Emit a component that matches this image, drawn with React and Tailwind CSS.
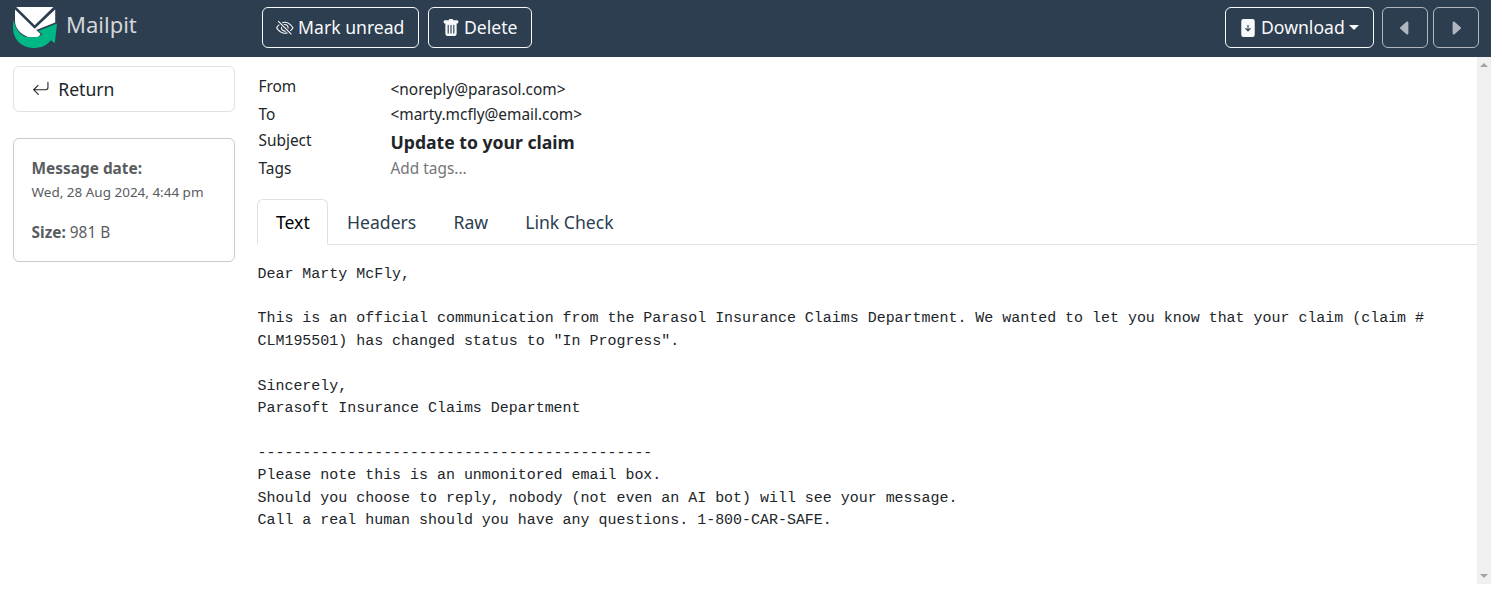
import { BsEyeSlash, BsTrashFill, BsFileArrowDownFill, BsCaretLeftFill, BsCaretRightFill, BsArrowReturnLeft } from "react-icons/bs";

const body = `Dear Marty McFly,

This is an official communication from the Parasol Insurance Claims Department. We wanted to let you know that your claim (claim # CLM195501) has changed status to "In Progress".

Sincerely,
Parasoft Insurance Claims Department

--------------------------------------------
Please note this is an unmonitored email box.
Should you choose to reply, nobody (not even an AI bot) will see your message.
Call a real human should you have any questions. 1-800-CAR-SAFE.`;

function Logo() {
  return (
    <svg className="block h-[42px] w-[45px]" viewBox="0 0 45 42">
      <path d="M3.2 0 H40.4 L21.7 18.3 Z" fill="#fff" />
      <path d="M2 2.6 L21.7 21.8 L42.2 2.4 V15.6 L23.2 23 L27.6 27 L25.2 30.2 H15.5 C7 27 2 21 2 14 Z" fill="#fff" />
      <path d="M0.6 13 C2.5 23 8 30 16 30.3 C22 30.5 27 30 29.3 27 L25.2 24 L44 16.5 L41.8 36.2 L38 33.3 C33 39.5 27 41 20 41 C8 40.5 0 32 0 21 C0 17 .2 14.5 .6 13 Z" fill="#00b786" />
    </svg>
  );
}

function Field({ label, children, className }) {
  return (
    <div className={`flex ${className}`}>
      <div className="w-[132px]">{label}</div>
      {children}
    </div>
  );
}

const navButton = "flex h-[41px] items-center rounded-md border border-[#f8f9fa]";

export default function App() {
  return (
    <div className="flex h-[607px] w-full flex-col overflow-hidden bg-white font-['Noto_Sans',sans-serif] text-[17.6px] leading-[26.4px] text-[#212529]">
      <header className="flex h-[57px] shrink-0 items-start bg-[#2c3e50] pt-[7px] pr-3 pl-[13px] text-[#f8f9fa]">
        <div className="flex w-[249px] text-[#d3d6d9]">
          <Logo />
          <span className="ml-2 pt-px text-[22px] leading-[32px]">Mailpit</span>
        </div>
        <div className="flex gap-[9px]">
          <button className={`${navButton} w-[157px] gap-[4.5px] pl-[13px]`}><BsEyeSlash className="mt-px size-[17.6px]" />Mark unread</button>
          <button className={`${navButton} w-[104px] gap-[4px] pl-[13px]`}><BsTrashFill className="mt-px size-[18px]" />Delete</button>
        </div>
        <div className="ml-auto flex">
          <button className={`${navButton} mr-2 w-[149px] gap-[4px] pl-[13px]`}>
            <BsFileArrowDownFill className="mt-px size-[18px]" />Download
            <span className="border-x-[5px] border-t-[5px] border-x-transparent border-t-[#f8f9fa]" />
          </button>
          <button className={`${navButton} mr-[5px] w-[46px] justify-center opacity-65`}><BsCaretLeftFill className="mt-px size-[18px]" /></button>
          <button className={`${navButton} w-[46px] justify-center opacity-65`}><BsCaretRightFill className="mt-px size-[18px]" /></button>
        </div>
      </header>
      <div className="flex h-[527px]">
        <aside className="w-[257px] pt-[9px] pl-[13px]">
          <div className="flex h-[46px] w-[222px] items-center gap-[9px] rounded-md border border-[#dee2e6] pl-[17.6px]">
            <BsArrowReturnLeft className="size-[17.6px]" />Return
          </div>
          <div className="mt-[26px] h-[124px] w-[222px] rounded-md border border-[#cacbcc] pt-[18px] pl-[17.6px] text-[15.4px] leading-[24px] text-[#595c5f]">
            <div className="font-bold">Message date:</div>
            <div className="-mt-px text-[13.475px]">Wed, 28 Aug 2024, 4:44 pm</div>
            <div className="mt-[17px]"><b>Size:</b> 981 B</div>
          </div>
        </aside>
        <main className="min-w-0 flex-1 pt-[17px]">
          <div className="h-[125px] pl-[1.5px] text-[15.4px] leading-[26px]">
            <Field label="From" className="h-[28px]"><span className="pt-[3px]">&lt;noreply@parasol.com&gt;</span></Field>
            <Field label="To" className="h-[26px]"><span>&lt;marty.mcfly@email.com&gt;</span></Field>
            <Field label="Subject" className="h-[28px]"><b className="pt-px text-[17.6px]">Update to your claim</b></Field>
            <Field label="Tags" className="h-[28px]"><span className="text-[#757575]">Add tags...</span></Field>
          </div>
          <nav className="flex h-[46px] border-b border-[#dee2e6] text-[#2c3e50]">
            <div className="h-[46px] w-[71px] rounded-t-md border border-[#dee2e6] border-b-white bg-white pt-[9px] pl-[18px] text-black">Text</div>
            <div className="w-[106.5px] pt-[10px] pl-[19px]">Headers</div>
            <div className="w-[71.7px] pt-[10px] pl-[19px]">Raw</div>
            <div className="pt-[10px] pl-[19px]">Link Check</div>
          </nav>
          <pre className="w-[1195px] pt-[17.52px] pl-[0.5px] font-['Liberation_Mono',monospace] text-[14.96px] leading-[22.44px] whitespace-pre-wrap">{body}</pre>
        </main>
        <div className="flex w-[14px] flex-col items-center justify-between bg-[#f0f0f0] py-[6px]">
          <span className="border-x-[4px] border-b-[4px] border-x-transparent border-b-[#a3a3a3]" />
          <span className="border-x-[4px] border-t-[4px] border-x-transparent border-t-[#a3a3a3]" />
        </div>
      </div>
    </div>
  );
}
